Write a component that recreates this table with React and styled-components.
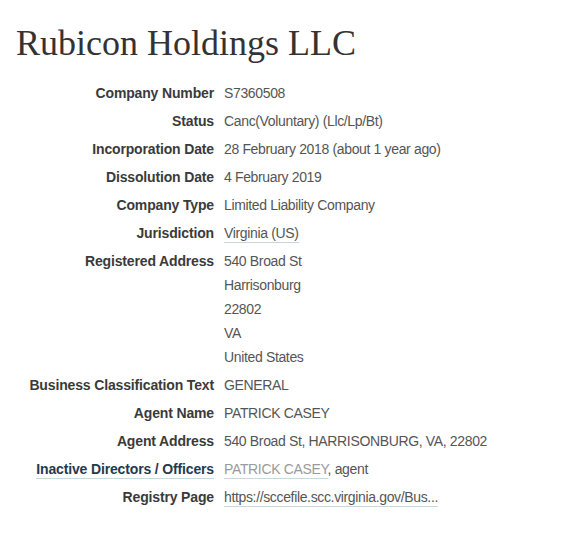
import React from 'react';
import styled, { createGlobalStyle } from 'styled-components';

const GlobalStyle = createGlobalStyle`
  body {
    margin: 0;
    background: #fff;
    font-family: "Liberation Sans", Arial, sans-serif;
  }
`;

const Page = styled('div')`
  padding: 21px 16px 30px 16px;
`;

const Title = styled('h1')`
  margin: 0 0 16px 0;
  font-family: "Liberation Serif", "Times New Roman", serif;
  font-weight: 400;
  font-size: 36px;
  line-height: 44px;
  color: #333;
`;

const Details = styled('dl')`
  display: grid;
  grid-template-columns: 198px 1fr;
  column-gap: 10px;
  row-gap: 4px;
  margin: 0;
  font-size: 14px;
  line-height: 24px;
`;

const Term = styled('dt')`
  text-align: right;
  font-weight: 700;
  letter-spacing: -0.15px;
  color: ${p => (p.$link ? '#24394d' : '#3a3a3a')};
  white-space: nowrap;
`;

const TermLink = styled('span')`
  border-bottom: 1px solid #c6d8e0;
  padding-bottom: 1px;
`;

const Value = styled('dd')`
  margin: 0;
  color: #555;
  letter-spacing: -0.35px;
  white-space: nowrap;
`;

const Line = styled('div')``;

const Link = styled('a')`
  color: ${p => (p.$muted ? '#9a9a9a' : '#555')};
  text-decoration: none;
  border-bottom: 1px solid #c6d8e0;
  padding-bottom: 1px;
`;

const rows = [
  { label: 'Company Number', value: 'S7360508' },
  { label: 'Status', value: 'Canc(Voluntary) (Llc/Lp/Bt)' },
  { label: 'Incorporation Date', value: '28 February 2018 (about 1 year ago)' },
  { label: 'Dissolution Date', value: '4 February 2019' },
  { label: 'Company Type', value: 'Limited Liability Company' },
];

const address = ['540 Broad St', 'Harrisonburg', '22802', 'VA', 'United States'];

export default function App() {
  return (
    <>
      <GlobalStyle />
      <Page>
        <Title>Rubicon Holdings LLC</Title>
        <Details>
          {rows.map(r => (
            <React.Fragment key={r.label}>
              <Term>{r.label}</Term>
              <Value>{r.value}</Value>
            </React.Fragment>
          ))}
          <Term>Jurisdiction</Term>
          <Value>
            <Link href="#">Virginia (US)</Link>
          </Value>
          <Term>Registered Address</Term>
          <Value>
            {address.map(a => (
              <Line key={a}>{a}</Line>
            ))}
          </Value>
          <Term>Business Classification Text</Term>
          <Value>GENERAL</Value>
          <Term>Agent Name</Term>
          <Value>PATRICK CASEY</Value>
          <Term>Agent Address</Term>
          <Value>540 Broad St, HARRISONBURG, VA, 22802</Value>
          <Term $link>
            <TermLink>Inactive Directors / Officers</TermLink>
          </Term>
          <Value>
            <Link href="#" $muted>PATRICK CASEY</Link>, agent
          </Value>
          <Term>Registry Page</Term>
          <Value>
            <Link href="#">https://sccefile.scc.virginia.gov/Bus...</Link>
          </Value>
        </Details>
      </Page>
    </>
  );
}
